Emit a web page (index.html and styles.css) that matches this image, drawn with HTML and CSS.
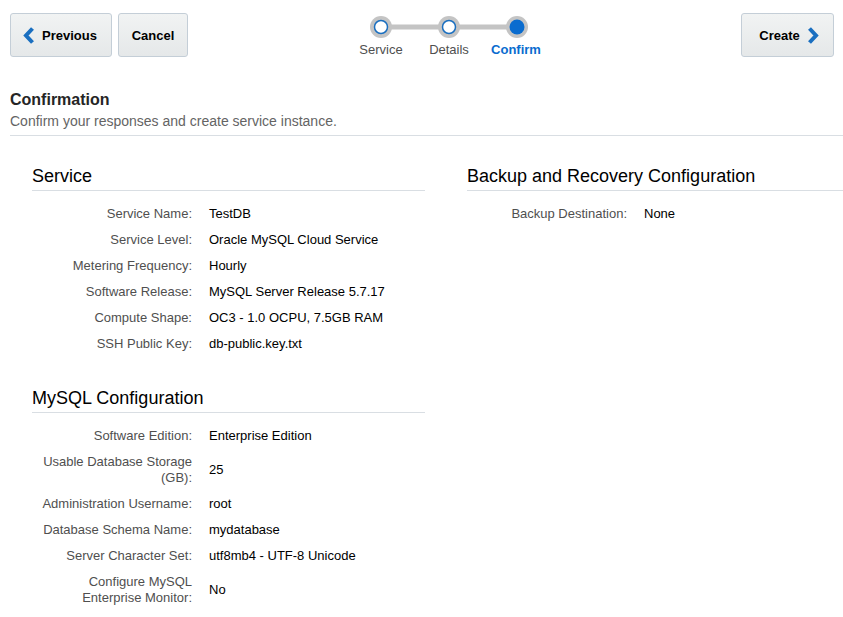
FILE: index.html
```html
<!DOCTYPE html>
<html>
<head>
<meta charset="utf-8">
<link rel="stylesheet" href="styles.css">
</head>
<body>
<div class="page">
  <div class="topbar">
    <div class="btn-group">
      <button class="btn btn-prev"><svg class="chev" width="12" height="17" viewBox="0 0 12 17"><polyline points="9.5,1.5 3,8.5 9.5,15.5" fill="none" stroke="#1a6fc0" stroke-width="4" stroke-linecap="butt" stroke-linejoin="miter"/></svg><span>Previous</span></button>
      <button class="btn btn-cancel">Cancel</button>
    </div>
    <div class="train">
      <svg class="track" width="204" height="28" viewBox="0 0 204 28">
        <rect x="34" y="11.5" width="136" height="5" fill="#c4c4c4"/>
        <circle cx="34" cy="14" r="11" fill="#c4c4c4"/>
        <circle cx="34" cy="14" r="6.5" fill="#fff" stroke="#1a6fc0" stroke-width="1.5"/>
        <circle cx="102" cy="14" r="11" fill="#c4c4c4"/>
        <circle cx="102" cy="14" r="6.5" fill="#fff" stroke="#1a6fc0" stroke-width="1.5"/>
        <circle cx="170" cy="14" r="11" fill="#c4c4c4"/>
        <circle cx="170" cy="14" r="7.5" fill="#0a6ccf"/>
      </svg>
      <div class="train-labels">
        <span>Service</span>
        <span>Details</span>
        <span class="current">Confirm</span>
      </div>
    </div>
    <button class="btn btn-create"><span>Create</span><svg class="chev" width="12" height="17" viewBox="0 0 12 17"><polyline points="2.5,1.5 9,8.5 2.5,15.5" fill="none" stroke="#1a6fc0" stroke-width="4" stroke-linecap="butt" stroke-linejoin="miter"/></svg></button>
  </div>

  <div class="intro">
    <div class="intro-title">Confirmation</div>
    <div class="intro-sub">Confirm your responses and create service instance.</div>
  </div>

  <div class="columns">
    <div class="col col-left">
      <div class="section">
        <h2 class="section-title">Service</h2>
        <div class="rows">
          <div class="row"><div class="label">Service Name:</div><div class="value">TestDB</div></div>
          <div class="row"><div class="label">Service Level:</div><div class="value">Oracle MySQL Cloud Service</div></div>
          <div class="row"><div class="label">Metering Frequency:</div><div class="value">Hourly</div></div>
          <div class="row"><div class="label">Software Release:</div><div class="value">MySQL Server Release 5.7.17</div></div>
          <div class="row"><div class="label">Compute Shape:</div><div class="value">OC3 - 1.0 OCPU, 7.5GB RAM</div></div>
          <div class="row"><div class="label">SSH Public Key:</div><div class="value">db-public.key.txt</div></div>
        </div>
      </div>
      <div class="section">
        <h2 class="section-title">MySQL Configuration</h2>
        <div class="rows">
          <div class="row"><div class="label">Software Edition:</div><div class="value">Enterprise Edition</div></div>
          <div class="row"><div class="label">Usable Database Storage (GB):</div><div class="value">25</div></div>
          <div class="row"><div class="label">Administration Username:</div><div class="value">root</div></div>
          <div class="row"><div class="label">Database Schema Name:</div><div class="value">mydatabase</div></div>
          <div class="row"><div class="label">Server Character Set:</div><div class="value">utf8mb4 - UTF-8 Unicode</div></div>
          <div class="row"><div class="label">Configure MySQL Enterprise Monitor:</div><div class="value">No</div></div>
        </div>
      </div>
    </div>
    <div class="col col-right">
      <div class="section">
        <h2 class="section-title">Backup and Recovery Configuration</h2>
        <div class="rows">
          <div class="row"><div class="label">Backup Destination:</div><div class="value">None</div></div>
        </div>
      </div>
    </div>
  </div>
</div>
</body>
</html>
```

FILE: styles.css
```css
* { box-sizing: border-box; }
html, body {
  margin: 0;
  padding: 0;
  background: #fff;
  font-family: Arial, "Liberation Sans", sans-serif;
  color: #252525;
}
.page {
  width: 843px;
}
.topbar {
  display: flex;
  align-items: flex-start;
  padding: 13px 9px 0 10px;
}
.btn-group {
  display: flex;
  gap: 6px;
}
.btn {
  height: 44px;
  display: flex;
  align-items: center;
  justify-content: center;
  gap: 7px;
  border: 1px solid #c4ced7;
  border-radius: 3px;
  background: linear-gradient(#f1f3f3, #e5e8e9);
  font-family: Arial, "Liberation Sans", sans-serif;
  font-size: 13px;
  font-weight: bold;
  color: #000;
  padding: 0;
  cursor: pointer;
}
.btn-prev { width: 102px; padding-right: 2px; }
.btn-cancel { width: 70px; }
.btn-create { width: 93px; margin-left: auto; gap: 7px; padding-left: 3px; }
.chev { display: block; }
.train {
  margin-left: 159px;
  width: 204px;
  display: flex;
  flex-direction: column;
  align-items: center;
}
.track {
  display: block;
  margin-top: 0;
}
.train-labels {
  display: grid;
  grid-template-columns: 68px 68px 68px;
  width: 204px;
  margin-top: 1px;
  font-size: 13px;
  line-height: 16px;
  color: #4f4f4f;
  text-align: center;
}
.train-labels .current {
  color: #0a6ccf;
  font-weight: bold;
  margin-left: -2px;
}
.intro {
  margin: 32px 0 0 10px;
  padding-bottom: 5px;
  border-bottom: 1px solid #d9dee3;
}
.intro-title {
  font-size: 16px;
  font-weight: bold;
  line-height: 20px;
  color: #252525;
}
.intro-sub {
  font-size: 14px;
  line-height: 18px;
  margin-top: 2px;
  color: #646464;
}
.columns {
  display: flex;
  padding-left: 32px;
  margin-top: 29px;
}
.col-left { width: 393px; }
.col-right { margin-left: 42px; flex: 1; }
.section + .section { margin-top: 30px; }
.section-title {
  margin: 0;
  font-size: 18px;
  font-weight: normal;
  line-height: 22px;
  color: #000;
  padding-bottom: 3px;
  border-bottom: 1px solid #d9dee3;
}
.rows {
  margin-top: 10px;
}
.row {
  display: flex;
  align-items: center;
  padding: 5px 0;
  font-size: 13px;
  line-height: 16px;
}
.label {
  width: 160px;
  flex: none;
  text-align: right;
  color: #4f4f4f;
}
.value {
  margin-left: 17px;
  color: #000;
}
```
